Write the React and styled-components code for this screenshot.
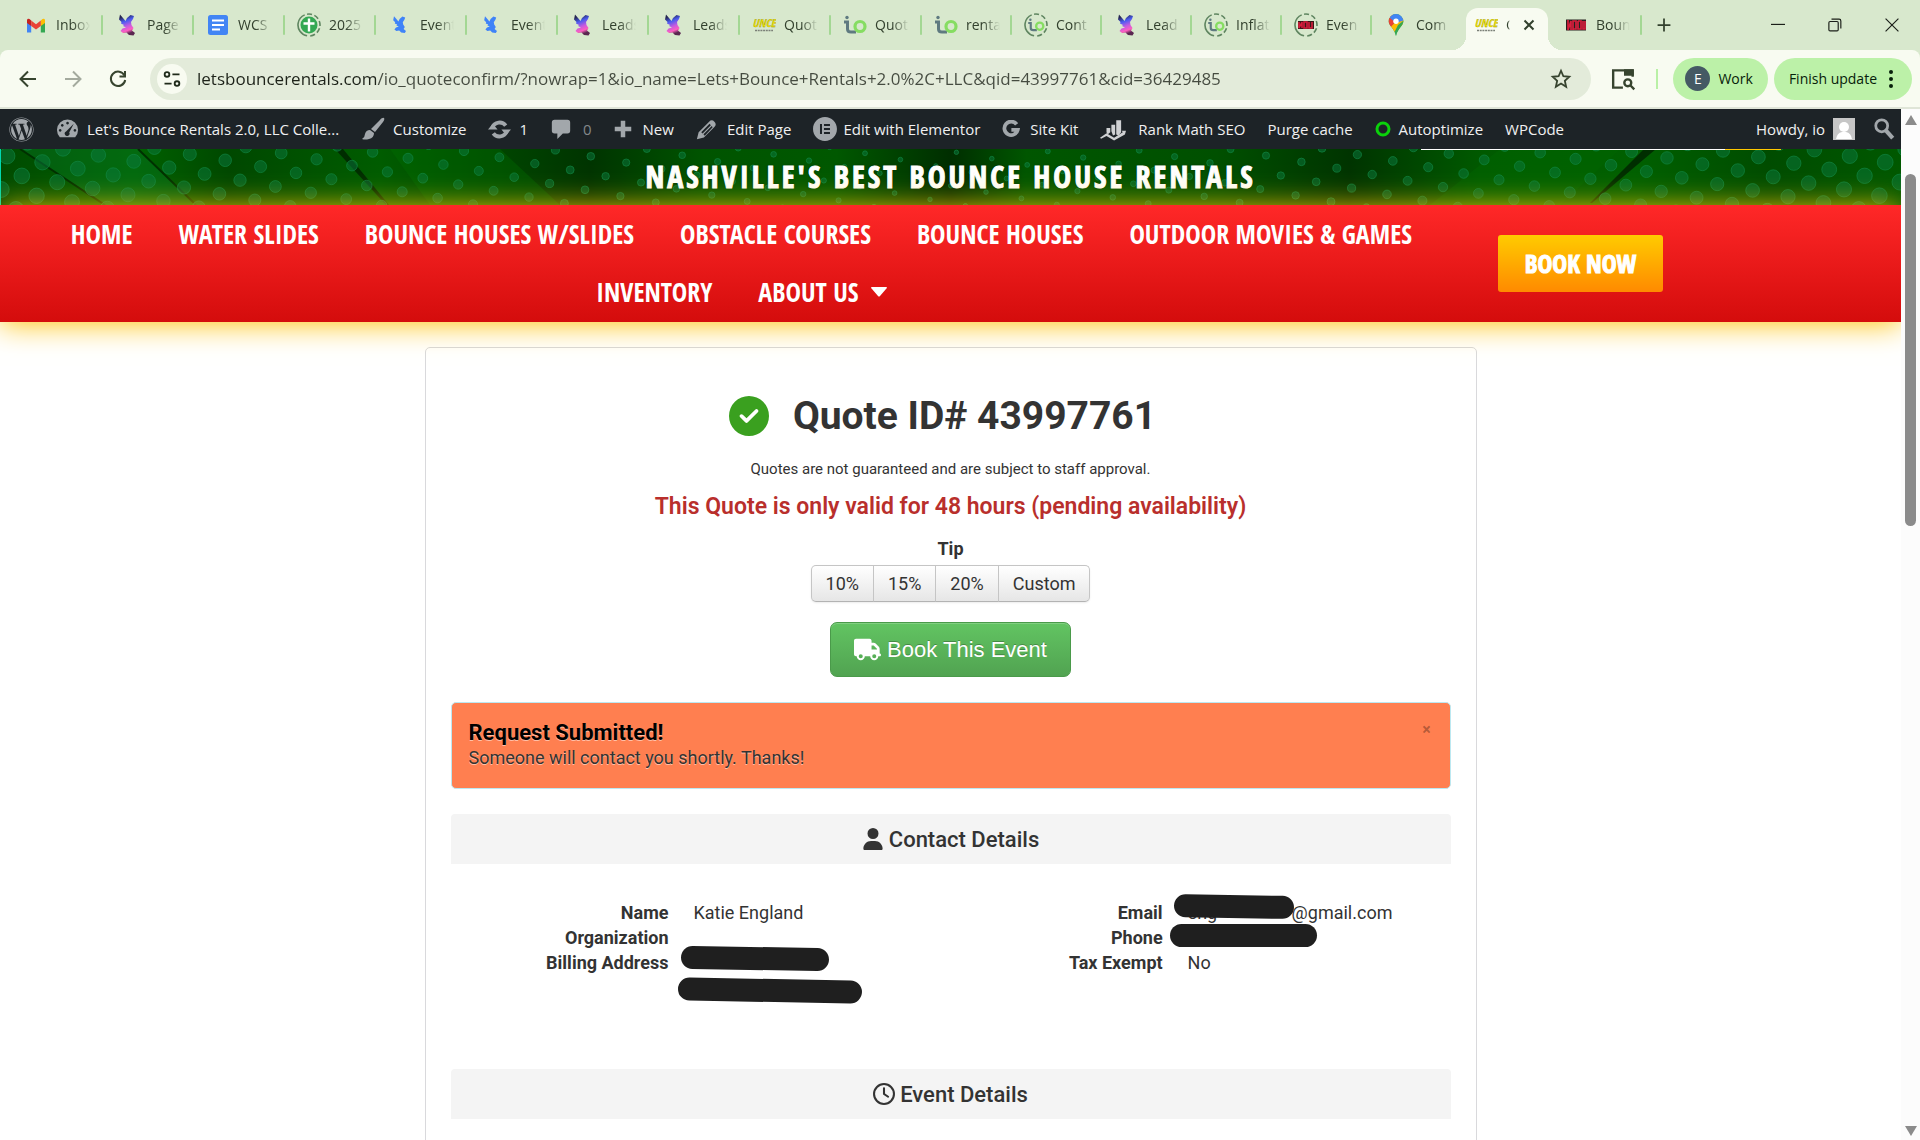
import React from "react";
import styled, { createGlobalStyle, css } from "styled-components";
import {
  FaCircleCheck,
  FaElementor,
  FaRegClock,
  FaTruck,
  FaUser,
  FaWordpress,
} from "react-icons/fa6";

const uiFont = `"Open Sans", "Noto Sans", sans-serif`;
const bodyFont = `Roboto, "Liberation Sans", sans-serif`;
const comicFont = `"Open Sans Condensed", "Roboto Condensed", sans-serif`;

const GlobalStyle = createGlobalStyle`
  * {
    box-sizing: border-box;
  }

  body {
    margin: 0;
    overflow: hidden;
    background: #fff;
    font-family: ${bodyFont};
  }

  button,
  input {
    margin: 0;
    padding: 0;
    border: 0;
    background: none;
    color: inherit;
    font: inherit;
  }
`;

/* ---------- browser window ---------- */

const Window = styled.div`
  display: flex;
  flex-direction: column;
  height: 100vh;
`;

const TabStrip = styled.header`
  display: flex;
  flex-shrink: 0;
  align-items: center;
  height: 50px;
  padding-left: 12px;
  background: #d8e8cd;
  color: #32402d;
  font-family: ${uiFont};
`;

const Tab = styled.div`
  display: flex;
  flex: 0 1 ${props => (props.$wide ? 91 : 90)}px;
  align-items: center;
  gap: 8px;
  min-width: 0;
  height: 40px;
  padding-left: 12px;

  &::after {
    content: "";
    width: 2px;
    height: 20px;
    margin-left: auto;
    border-radius: 1px;
    background: ${props => (props.$divider ? "#a3d793" : "transparent")};
  }
`;

const ActiveTab = styled.div`
  position: relative;
  display: flex;
  flex: 0 1 82px;
  align-self: flex-end;
  align-items: center;
  gap: 8px;
  height: 42px;
  margin: 0 4px;
  padding: 0 8px 8px;
  border-radius: 12px 12px 0 0;
  background: #f8fbf1;

  &::before,
  &::after {
    content: "";
    position: absolute;
    bottom: 0;
    width: 14px;
    height: 14px;
  }

  &::before {
    right: 100%;
    background: radial-gradient(circle at 0 0, transparent 14px, #f8fbf1 14px);
  }

  &::after {
    left: 100%;
    background: radial-gradient(circle at 100% 0, transparent 14px, #f8fbf1 14px);
  }
`;

const Favicon = styled.svg`
  flex-shrink: 0;
  width: 24px;
  height: 24px;
`;

const TabTitle = styled.span`
  width: ${props => (props.$short ? 4 : 34)}px;
  overflow: hidden;
  font-size: 14px;
  line-height: 20px;
  white-space: nowrap;
  mask-image: linear-gradient(90deg, #000 50%, transparent);
`;

const StripButton = styled.button`
  display: flex;
  align-items: center;
  justify-content: center;
  width: ${props => props.$width}px;
  height: 40px;
`;

const WindowButtons = styled.div`
  display: flex;
  margin-left: auto;
  color: #1b1f19;
`;

const Toolbar = styled.div`
  display: flex;
  flex-shrink: 0;
  align-items: center;
  height: 59px;
  padding: 0 8px 0 5px;
  border-bottom: 2px solid #dfe5d7;
  border-radius: 8px 8px 0 0;
  background: #f8fbf1;
  color: #37442f;
  font-family: ${uiFont};
`;

const ToolbarBack = styled.div`
  flex-shrink: 0;
  background: #d8e8cd;
`;

const NavButton = styled.button`
  display: flex;
  flex-shrink: 0;
  align-items: center;
  justify-content: center;
  width: 45px;
  height: 42px;
  color: ${props => (props.disabled ? "#a4aa9e" : "#37442f")};
`;

const Omnibox = styled.div`
  display: flex;
  flex: 1;
  align-items: center;
  gap: 10px;
  height: 42px;
  margin-left: 10px;
  padding: 0 19px 0 7px;
  border-radius: 21px;
  background: #e3ebda;
`;

const SiteInfo = styled.button`
  display: flex;
  align-items: center;
  justify-content: center;
  width: 30px;
  height: 30px;
  border-radius: 50%;
  background: #f8fbf1;
  color: #1f2a1a;
`;

/* the host is darker than the rest of the address */
const Address = styled.input`
  flex: 1;
  min-width: 0;
  height: 30px;
  background: linear-gradient(90deg, #1d2219 181px, #454b40 181px);
  background-clip: text;
  color: transparent;
  font-size: 17px;
  outline: none;
`;

const SidePanelButton = styled(NavButton)`
  width: 65px;
`;

const ToolbarDivider = styled.span`
  width: 2px;
  height: 20px;
  margin-right: 15px;
  background: #b9f0a6;
`;

const Pill = styled.button`
  display: flex;
  flex-shrink: 0;
  align-items: center;
  gap: 8px;
  height: 42px;
  margin-right: ${props => (props.$last ? 0 : 6)}px;
  padding: 0 15px 0 ${props => (props.$last ? 15 : 12)}px;
  border-radius: 21px;
  background: #bcf1a8;
  color: #07210a;
  font-size: 14px;
`;

const Initial = styled.span`
  display: flex;
  align-items: center;
  justify-content: center;
  width: 25px;
  height: 25px;
  border-radius: 50%;
  background: #455a64;
  color: #fff;
`;

const Viewport = styled.div`
  display: flex;
  flex: 1;
  min-height: 0;
`;

const Site = styled.div`
  flex: 1;
  min-width: 0;
  overflow: hidden;
`;

const Scrollbar = styled.div`
  display: flex;
  flex-direction: column;
  align-items: center;
  width: 19px;
  padding: 6px 0 4px;
  background: #fcfcfc;
`;

const ScrollTrack = styled.div`
  flex: 1;
  width: 11px;
  padding: 49px 0 0;
`;

const ScrollThumb = styled.div`
  height: 37%;
  border-radius: 6px;
  background: #8b8b8b;
`;

/* ---------- admin bar ---------- */

const AdminBar = styled.div`
  display: flex;
  align-items: center;
  gap: 22px;
  height: 40px;
  padding: 0 6px 0 9px;
  background: #1d2327;
  color: #f0f0f1;
  font-family: ${uiFont};
`;

const AdminItem = styled.a`
  display: flex;
  align-items: center;
  gap: ${props => (props.$gap ? props.$gap : 8)}px;
  color: ${props => (props.$muted ? "#83878a" : "#f0f0f1")};
  font-size: 15px;
  line-height: 42px;
  text-decoration: none;
  white-space: nowrap;

  svg {
    flex-shrink: 0;
    color: #a2a7ab;
  }
`;

const AdminRight = styled.div`
  display: flex;
  gap: 18px;
  margin-left: auto;
`;

/* ---------- site header ---------- */

const Banner = styled.div`
  display: grid;
  align-items: center;
  height: 56px;
  background: #005000;

  > * {
    grid-area: 1 / 1;
  }
`;

const BannerArt = styled.svg`
  width: 100%;
  height: 56px;
`;

const BannerTitle = styled.h2`
  position: relative;
  margin: 0;
  color: #fff;
  font-family: ${comicFont};
  font-size: 30px;
  font-weight: 700;
  letter-spacing: 3px;
  line-height: 56px;
  text-align: center;
  text-shadow: 0 0 3px rgba(0, 0, 0, 0.5);
  -webkit-text-stroke: 1px #fff;
`;

const NavBar = styled.nav`
  position: relative;
  display: flex;
  align-items: center;
  background: linear-gradient(#ff2828, #d40c0c);
  box-shadow: 0 2px 28px #ffc107;
  font-family: ${comicFont};
`;

const Menu = styled.ul`
  display: flex;
  flex: 0 0 78%;
  flex-wrap: wrap;
  justify-content: center;
  margin: 0;
  padding: 0 0 1px;
  list-style: none;
`;

const MenuLink = styled.a`
  display: flex;
  align-items: center;
  gap: 12px;
  padding: 0 23px;
  color: #fff;
  font-size: 26px;
  font-weight: 700;
  line-height: 58px;
  text-decoration: none;
`;

const BookNow = styled.a`
  margin-left: 15px;
  padding: 0 27px;
  border-radius: 3px;
  background: linear-gradient(#ffcb00, #ff8a00);
  color: #fff;
  font-size: 25px;
  font-weight: 700;
  line-height: 57px;
  text-decoration: none;
  -webkit-text-stroke: 1px #fff;
`;

/* ---------- quote ---------- */

const Card = styled.main`
  width: 1052px;
  max-width: 100%;
  margin: 25px auto 0;
  padding: 40px 25px 100px;
  border: 1px solid #d9d9dc;
  border-radius: 5px;
  background: #fff;
  color: #333;
  font-size: 18px;
  line-height: 25px;
`;

const Summary = styled.section`
  display: flex;
  flex-direction: column;
  align-items: center;
`;

const QuoteTitle = styled.h1`
  display: flex;
  align-items: center;
  gap: 24px;
  margin: 0;
  padding-right: 16px;
  font-size: 39px;
  font-weight: 700;
  line-height: 56px;

  svg {
    color: #3aa01f;
  }
`;

const Disclaimer = styled.p`
  margin: 13px 0 0;
  font-size: 15px;
`;

const Validity = styled.p`
  margin: 12px 0 0;
  color: #b92f2c;
  font-size: 23px;
  font-weight: 600;
`;

const TipLabel = styled.strong`
  margin-top: 17px;
`;

const TipGroup = styled.div`
  display: flex;
  margin-top: 4px;
  border-radius: 5px;
  box-shadow: 0 1px 2px rgba(0, 0, 0, 0.08);
`;

const TipButton = styled.button`
  height: 37px;
  padding: 0 14px;
  border: 1px solid #c5c5c5;
  border-bottom-color: #b3b3b3;
  background: linear-gradient(#fff, #e6e6e6);

  & + & {
    margin-left: -1px;
  }

  &:first-child {
    border-radius: 5px 0 0 5px;
  }

  &:last-child {
    border-radius: 0 5px 5px 0;
  }
`;

const BookButton = styled.button`
  display: flex;
  align-items: center;
  gap: 6px;
  height: 55px;
  margin-top: 20px;
  padding: 0 23px;
  border: 1px solid #4a9a4a;
  border-radius: 7px;
  background: linear-gradient(#62c462, #51a351);
  box-shadow: inset 0 1px 0 rgba(255, 255, 255, 0.2);
  color: #fff;
  font-family: "Liberation Sans", sans-serif;
  font-size: 22px;
  text-shadow: 0 -1px 0 rgba(0, 0, 0, 0.25);
`;

const Alert = styled.div`
  display: flex;
  align-items: flex-start;
  justify-content: space-between;
  margin-top: 25px;
  padding: 17px 17px 18px;
  border: 1px solid #bce8f1;
  border-radius: 5px;
  background: #ff7f50;
  text-shadow: 0 1px 0 rgba(255, 255, 255, 0.5);

  h4 {
    margin: 0;
    color: #000;
    font-size: 22px;
    line-height: 25px;
  }

  p {
    margin: 0;
  }
`;

const CloseButton = styled.button`
  width: 12px;
  margin-top: -3px;
  color: rgba(0, 0, 0, 0.3);
  font-size: 16px;
  font-weight: 700;
  line-height: 25px;
`;

const SectionTitle = styled.h3`
  display: flex;
  align-items: center;
  justify-content: center;
  gap: 5px;
  height: 50px;
  margin: 25px 0 0;
  border-radius: 4px 4px 0 0;
  background: #f4f4f4;
  font-size: 22px;
  font-weight: 500;
`;

const Details = styled.div`
  display: grid;
  grid-template-columns: 42fr 43fr;
  margin: 36px 0 69px;

  & + ${SectionTitle} {
    margin-top: 0;
  }
`;

const DetailList = styled.dl`
  display: grid;
  grid-template-columns: 218px 1fr;
  column-gap: 25px;
  align-content: start;
  margin: 0;

  dt {
    font-weight: 700;
    text-align: right;
  }

  dd {
    position: relative;
    min-height: 25px;
    margin: 0;
  }
`;

const AddressValue = styled.dd`
  && {
    min-height: 50px;
  }
`;

const MailName = styled.span`
  display: inline-block;
  width: 104px;
`;

const Redaction = styled.span`
  ${({ $left, $top, $width, $tilt }) => css`
    position: absolute;
    left: ${$left}px;
    top: ${$top}px;
    width: ${$width}px;
    transform: rotate(${$tilt}deg);
  `}
  height: 23px;
  border-radius: 12px;
  background: #1f1f1f;
`;

/* ---------- favicons ---------- */

const birdPath =
  "M5 1.500 L8 5 L10.500 8 L12 5 L15.500 2 L19 3 L18 6 L16 9 L16.500 12 L18.500 15 L17 17.500 L20 20 L18.500 22.500 L14 22 L11.500 19.500 L8 20 L5.500 18 L7.500 15.500 L11 14.500 L8 13 L9 12 L6 10.500 L6.500 9 L4 6.500 Z";

const Ring = () => (
  <circle
    cx="12"
    cy="12"
    r="11"
    fill="none"
    stroke="#5f8560"
    strokeWidth="1.6"
    strokeDasharray="28 2.5 5 2.5 5 2.5 5 2.5 5 2.5 5 4"
    transform="rotate(100 12 12)"
  />
);

const IoMark = () => (
  <g fill="none">
    <circle cx="4" cy="4.500" r="1.700" fill="#5f7a80" />
    <path d="M1 9 H4.500 V16 Q4.500 19 8 19 H13" stroke="#5f7a80" strokeWidth="3" />
    <circle cx="17" cy="13.500" r="5" stroke="#86dd62" strokeWidth="3.200" />
  </g>
);

const favicons = {
  gmail: (
    <g>
      <path d="M3 19.500 V7 L7.200 10 V19.500 Z" fill="#4285f4" />
      <path d="M16.800 19.500 V10 L21 7 V19.500 Z" fill="#34a853" />
      <path d="M3 7 V10 L7.200 13 V7.500 L5.500 6 Q3.500 5 3 7 Z" fill="#c5221f" />
      <path d="M21 7 V10 L16.800 13 V7.500 L18.500 6 Q20.500 5 21 7 Z" fill="#fbbc04" />
      <path d="M7.200 7.500 L12 11.200 L16.800 7.500 V13 L12 16.600 L7.200 13 Z" fill="#ea4335" />
    </g>
  ),
  bird: (
    <g>
      <defs>
        <linearGradient id="bird" x1="0" y1="0" x2="0.300" y2="1">
          <stop offset="0.150" stopColor="#26264f" />
          <stop offset="0.400" stopColor="#4a5cf0" />
          <stop offset="0.650" stopColor="#c65be0" />
          <stop offset="0.850" stopColor="#ff5fc0" />
          <stop offset="1" stopColor="#5a2850" />
        </linearGradient>
      </defs>
      <path d={birdPath} fill="url(#bird)" />
    </g>
  ),
  blueBird: <path d={birdPath} fill="#3f83f8" transform="translate(2 2) scale(0.800)" />,
  docs: (
    <g>
      <rect x="2" y="2" width="20" height="20" rx="2.500" fill="#4285f4" />
      <path d="M6 7.500 H18 M6 12 H18 M6 16.500 H14" stroke="#fff" strokeWidth="2" />
    </g>
  ),
  plus: (
    <g>
      <Ring />
      <circle cx="12" cy="12" r="8.500" fill="#34a853" />
      <path d="M12 5.500 V18.500 M6.500 10.500 H17.500" stroke="#fff" strokeWidth="2.400" />
    </g>
  ),
  bounce: (
    <g>
      <text
        x="12"
        y="14"
        textAnchor="middle"
        fill="#f2e400"
        stroke="#8c8a10"
        strokeWidth="0.300"
        fontFamily="Open Sans Condensed"
        fontSize="11"
        fontStyle="italic"
        fontWeight="700"
      >
        UNCE
      </text>
      <path d="M3 17.500 H21" stroke="#7b8078" strokeWidth="1.500" strokeDasharray="2 0.700" />
    </g>
  ),
  io: <IoMark />,
  ioRing: (
    <g>
      <Ring />
      <g transform="translate(3.500 3.500) scale(0.720)">
        <IoMark />
      </g>
    </g>
  ),
  red: (
    <g>
      <rect x="2" y="6.500" width="20" height="11" fill="#26201f" />
      <path
        d="M4 7 V17 L7 8 V17 M9 17 V8 H12 V16 H9 M14 8 V16 H17 V8 H14 M19 8 V16 H21 V8"
        stroke="#d81e3d"
        strokeWidth="1.700"
        fill="none"
      />
    </g>
  ),
  redRing: (
    <g>
      <Ring />
      <path d="M4 8 H20 V16 H4 Z" fill="#3a1717" />
      <path d="M5 9 V15 L8 9 V15 M10 9 V15 H13 V9 Z M15 9 V15 H18 V9" stroke="#d81e3d" strokeWidth="1.600" fill="none" />
    </g>
  ),
  maps: (
    <g>
      <clipPath id="pin">
        <path d="M12 1 A7.300 7.300 0 0 1 19.300 8.300 C19.300 13 13.500 15.500 12 23 C10.500 15.500 4.700 13 4.700 8.300 A7.300 7.300 0 0 1 12 1 Z" />
      </clipPath>
      <g clipPath="url(#pin)">
        <path d="M0 0 H24 V24 H0 Z" fill="#34a853" />
        <path d="M0 17 L20 4 L24 8 L9 20 Z" fill="#fbbc04" />
        <path d="M14 12 L24 4 V24 H8 Z" fill="#34a853" />
        <path d="M0 0 H8 L12 8 L6 15 H0 Z" fill="#ea4335" />
        <path d="M6 0 H24 V6 L12 10 L6 5 Z" fill="#4285f4" />
      </g>
      <circle cx="12" cy="8.300" r="2.700" fill="#fff" />
    </g>
  ),
};

const tabs = [
  ["gmail", "Inbox"],
  ["bird", "Page"],
  ["docs", "WCS"],
  ["plus", "2025"],
  ["blueBird", "Event"],
  ["blueBird", "Event"],
  ["bird", "Leads"],
  ["bird", "Leads"],
  ["bounce", "Quot"],
  ["io", "Quot"],
  ["io", "renta"],
  ["ioRing", "Cont"],
  ["bird", "Lead"],
  ["ioRing", "Inflat"],
  ["redRing", "Even"],
  ["maps", "Com"],
];

const Icon = ({ size = 24, children, ...rest }) => (
  <svg width={size} height={size} viewBox="0 0 24 24" fill="none" stroke="currentColor" {...rest}>
    {children}
  </svg>
);

const BrowserTabs = () => (
  <TabStrip>
    {tabs.map(([icon, title], i) => (
      <Tab key={i} $wide={i < 10} $divider={i < 15}>
        <Favicon viewBox="0 0 24 24">{favicons[icon]}</Favicon>
        <TabTitle>{title}</TabTitle>
      </Tab>
    ))}
    <ActiveTab>
      <Favicon viewBox="0 0 24 24">{favicons.bounce}</Favicon>
      <TabTitle $short>Q</TabTitle>
      <StripButton $width={22} aria-label="Close tab">
        <Icon size={12} strokeWidth="4">
          <path d="M3 3 L21 21 M21 3 L3 21" />
        </Icon>
      </StripButton>
    </ActiveTab>
    <Tab $divider>
      <Favicon viewBox="0 0 24 24">{favicons.red}</Favicon>
      <TabTitle>Boun</TabTitle>
    </Tab>
    <StripButton $width={44} aria-label="New tab">
      <Icon size={14} strokeWidth="3">
        <path d="M12 1 V23 M1 12 H23" />
      </Icon>
    </StripButton>
    <WindowButtons>
      <StripButton $width={57} aria-label="Minimize">
        <Icon size={14} strokeWidth="2">
          <path d="M0 11 H24" />
        </Icon>
      </StripButton>
      <StripButton $width={57} aria-label="Restore">
        <Icon size={14} strokeWidth="2">
          <path d="M6 2 H19 Q22 2 22 5 V18" />
          <rect x="1.500" y="6" width="16" height="16" rx="2" />
        </Icon>
      </StripButton>
      <StripButton $width={57} aria-label="Close">
        <Icon size={14} strokeWidth="2">
          <path d="M1 1 L23 23 M23 1 L1 23" />
        </Icon>
      </StripButton>
    </WindowButtons>
  </TabStrip>
);

const BrowserToolbar = () => (
  <ToolbarBack>
    <Toolbar>
      <NavButton aria-label="Back">
        <Icon size={24} strokeWidth="2">
          <path d="M20 12 H5 M12 4.500 L4.500 12 L12 19.500" />
        </Icon>
      </NavButton>
      <NavButton aria-label="Forward" disabled>
        <Icon size={24} strokeWidth="2">
          <path d="M4 12 H19 M12 4.500 L19.500 12 L12 19.500" />
        </Icon>
      </NavButton>
      <NavButton aria-label="Reload">
        <Icon size={24} strokeWidth="2">
          <path d="M18.500 8.500 A7.200 7.200 0 1 0 19.200 13" />
          <path d="M19 4 V9.500 H13.500" />
        </Icon>
      </NavButton>
      <Omnibox>
        <SiteInfo aria-label="Site information">
          <Icon size={20} strokeWidth="2.200">
            <circle cx="6" cy="6.500" r="2.800" />
            <path d="M12.500 6.500 H21 M3 17.500 H11.500" />
            <circle cx="18" cy="17.500" r="2.800" />
          </Icon>
        </SiteInfo>
        <Address
          aria-label="Address"
          defaultValue="letsbouncerentals.com/io_quoteconfirm/?nowrap=1&io_name=Lets+Bounce+Rentals+2.0%2C+LLC&qid=43997761&cid=36429485"
        />
        <Icon size={22} strokeWidth="2">
          <path d="M12 3 L14.600 9 L21 9.600 L16.200 14 L17.600 20.500 L12 17 L6.400 20.500 L7.800 14 L3 9.600 L9.400 9 Z" />
        </Icon>
      </Omnibox>
      <SidePanelButton aria-label="Side panel search">
        <Icon size={26} strokeWidth="2.200">
          <path d="M11 20 H2 V4 H20 V10" />
          <path d="M12 3 H21 V9 H12 Z" fill="currentColor" stroke="none" />
          <circle cx="15.500" cy="15.500" r="3.200" />
          <path d="M18 18 L21.500 21.500" />
        </Icon>
      </SidePanelButton>
      <ToolbarDivider />
      <Pill>
        <Initial>E</Initial>
        Work
      </Pill>
      <Pill $last>
        Finish update
        <svg width="12" height="20" viewBox="0 0 12 20" fill="currentColor">
          <circle cx="6" cy="3" r="2" />
          <circle cx="6" cy="10" r="2" />
          <circle cx="6" cy="17" r="2" />
        </svg>
      </Pill>
    </Toolbar>
  </ToolbarBack>
);

const WordPressBar = () => (
  <AdminBar>
    <AdminItem href="#wp" aria-label="WordPress">
      <FaWordpress size={25} />
    </AdminItem>
    <AdminItem href="#site">
      <Icon size={23} stroke="none">
        <path
          fill="currentColor"
          fillRule="evenodd"
          d="M4 20 A11 11 0 1 1 20 20 Z M12 4 a1.400 1.400 0 1 0 .1 0 Z M6.500 6.300 a1.400 1.400 0 1 0 .1 0 Z M4.300 11.500 a1.400 1.400 0 1 0 .1 0 Z M19.700 11.500 a1.400 1.400 0 1 0 .1 0 Z M18.500 6 L13.800 15 A2.500 2.500 0 1 1 10.500 14 Z"
        />
      </Icon>
      Let's Bounce Rentals 2.0, LLC Colle...
    </AdminItem>
    <AdminItem href="#customize">
      <Icon size={24} stroke="none">
        <path fill="currentColor" d="M23 1 Q24 2 22 5 L14 15 L10 12 L18 4 Q21 0 23 1 Z M9 13 L13 16 Q13 21 8 22 Q4 23 1 22 Q4 20 4 17 Q5 13 9 13 Z" />
      </Icon>
      Customize
    </AdminItem>
    <AdminItem href="#updates">
      <Icon size={23} strokeWidth="4">
        <path d="M4.500 10 A8 8 0 0 1 18.500 8" />
        <path d="M19.500 14 A8 8 0 0 1 5.500 16" />
        <path d="M14 12 H24 L19 18 Z M0 12 H10 L5 6 Z" fill="currentColor" stroke="none" />
      </Icon>
      1
    </AdminItem>
    <AdminItem href="#comments" $muted $gap={11}>
      <Icon size={22} stroke="none">
        <path fill="currentColor" d="M5 2 H19 Q22 2 22 5 V14 Q22 17 19 17 H14 L8 23 V17 H5 Q2 17 2 14 V5 Q2 2 5 2 Z" />
      </Icon>
      0
    </AdminItem>
    <AdminItem href="#new" $gap={11}>
      <Icon size={18} strokeWidth="6">
        <path d="M12 1 V23 M1 12 H23" />
      </Icon>
      New
    </AdminItem>
    <AdminItem href="#edit" $gap={10}>
      <Icon size={21} stroke="none">
        <path
          fill="currentColor"
          fillRule="evenodd"
          d="M15 3 Q18 0 21 3 Q24 6 21 9 L9 21 L1 23 L3 15 Z M6 15 L7.500 16.500 L17 7 L15.500 5.500 Z M8.500 17.500 L10 19 L19 9.500 L18 8 Z"
        />
      </Icon>
      Edit Page
    </AdminItem>
    <AdminItem href="#elementor" $gap={6}>
      <FaElementor size={24} />
      Edit with Elementor
    </AdminItem>
    <AdminItem href="#sitekit" $gap={10}>
      <Icon size={18} strokeWidth="5">
        <path d="M19.500 5.800 A9 9 0 1 0 21 13 H12.500" />
      </Icon>
      Site Kit
    </AdminItem>
    <AdminItem href="#rankmath" $gap={12}>
      <Icon size={26} stroke="none">
        <path fill="#cfd1d3" d="M6 15 V11 H9.500 V15 L7 17 Z M10.500 14 V8 H14 V17 L12 18 Z M15 17 V4 H19.500 V15 L17 18 Z" />
        <path d="M0 20 L6 16 L13 20 L21 15 L20 13.500 L24 13.500 L23 17 L13 22.500 L6 18.500 L1 21 Z" fill="#cfd1d3" />
      </Icon>
      Rank Math SEO
    </AdminItem>
    <AdminItem href="#purge">Purge cache</AdminItem>
    <AdminItem href="#autoptimize">
      <svg width="16" height="16" viewBox="0 0 16 16">
        <circle cx="8" cy="8" r="6" fill="none" stroke="#0bd10b" strokeWidth="3" />
      </svg>
      Autoptimize
    </AdminItem>
    <AdminItem href="#wpcode">WPCode</AdminItem>
    <AdminRight>
      <AdminItem href="#account">
        Howdy, io
        <svg width="22" height="22" viewBox="0 0 22 22">
          <path d="M0 0 H22 V22 H0 Z" fill="#c6c6c6" />
          <circle cx="11" cy="9" r="5" fill="#fff" />
          <path d="M3 21 Q4 15 9 14 H13 Q18 15 19 21 Z" fill="#fff" />
        </svg>
      </AdminItem>
      <AdminItem href="#search" aria-label="Search">
        <Icon size={22} strokeWidth="3">
          <circle cx="9.500" cy="8.500" r="6.500" />
          <path d="M14 13.500 L21.500 22" strokeWidth="4.500" />
        </Icon>
      </AdminItem>
    </AdminRight>
  </AdminBar>
);

/* halftone dots: a slanted lattice, big at both ends and small in the middle */
const dots = [];
for (let i = -20; i < 70; i++) {
  for (let j = -40; j < 20; j++) {
    const x = 189.8 + 35.4 * i - 20.6 * j;
    const y = 5 + 6.3 * i + 13.6 * j;
    if (x > -10 && x < 1911 && y > -8 && y < 64) {
      dots.push({ x, y, r: 2.2 + 5.8 * Math.pow(Math.abs(x - 950) / 950, 1.3) });
    }
  }
}

const BannerBackground = () => (
  <BannerArt viewBox="0 0 1901 56" preserveAspectRatio="none" aria-hidden="true">
    <defs>
      <linearGradient id="leaf">
        <stop offset="0" stopColor="#004a00" />
        <stop offset="0.070" stopColor="#006200" />
        <stop offset="0.120" stopColor="#004800" />
        <stop offset="0.200" stopColor="#005c00" />
        <stop offset="0.310" stopColor="#003400" />
        <stop offset="0.370" stopColor="#005400" />
        <stop offset="0.440" stopColor="#005800" />
        <stop offset="0.500" stopColor="#002e00" />
        <stop offset="0.540" stopColor="#005600" />
        <stop offset="0.640" stopColor="#005000" />
        <stop offset="0.710" stopColor="#003400" />
        <stop offset="0.780" stopColor="#005a00" />
        <stop offset="0.860" stopColor="#006000" />
        <stop offset="0.930" stopColor="#004c00" />
        <stop offset="1" stopColor="#005800" />
      </linearGradient>
    </defs>
    <path d="M0 0 H1901 V56 H0 Z" fill="url(#leaf)" />
    <path d="M20 0 H138 L196 56 H105 Z" fill="#0a7a2a" opacity="0.350" />
    <path d="M390 0 H500 L560 56 H430 Z" fill="#007000" opacity="0.350" />
    <path d="M1500 0 H1620 L1560 56 H1430 Z" fill="#006a00" opacity="0.350" />
    <path d="M138 0 L196 56 M20 0 L105 56" stroke="#003000" strokeWidth="2" />
    <path d="M335 0 H343 L389 56 H386 Z M1644 0 H1656 L1592 54 H1590 Z" fill="#002200" opacity="0.800" />
    {dots.map((dot, i) => (
      <circle key={i} cx={dot.x} cy={dot.y} r={dot.r} fill="#0a7a40" fillOpacity="0.500" stroke="#128a48" strokeOpacity="0.600" />
    ))}
    <path d="M0 0 H1 V56 H0 Z" fill="#00d8b0" />
    <path d="M1421 0 H1725 V1 H1421 Z" fill="#fff" />
    <path d="M1725 0 H1781 V1 H1725 Z" fill="#ffc800" />
  </BannerArt>
);

const menu = [
  "HOME",
  "WATER SLIDES",
  "BOUNCE HOUSES W/SLIDES",
  "OBSTACLE COURSES",
  "BOUNCE HOUSES",
  "OUTDOOR MOVIES & GAMES",
  "INVENTORY",
  "ABOUT US",
];

const SiteHeader = () => (
  <>
    <Banner>
      <BannerBackground />
      <BannerTitle>NASHVILLE'S BEST BOUNCE HOUSE RENTALS</BannerTitle>
    </Banner>
    <NavBar>
      <Menu>
        {menu.map(label => (
          <li key={label}>
            <MenuLink href="#menu">
              {label}
              {label === "ABOUT US" && (
                <svg width="16" height="10" viewBox="0 0 16 10">
                  <path d="M1 0 H15 Q17 0 15 2 L9 9 Q8 10 7 9 L1 2 Q-1 0 1 0 Z" fill="#fff" />
                </svg>
              )}
            </MenuLink>
          </li>
        ))}
      </Menu>
      <BookNow href="#book">BOOK NOW</BookNow>
    </NavBar>
  </>
);

const Quote = () => (
  <Card>
    <Summary>
      <QuoteTitle>
        <FaCircleCheck size={40} />
        Quote ID# 43997761
      </QuoteTitle>
      <Disclaimer>Quotes are not guaranteed and are subject to staff approval.</Disclaimer>
      <Validity>This Quote is only valid for 48 hours (pending availability)</Validity>
      <TipLabel>Tip</TipLabel>
      <TipGroup>
        {["10%", "15%", "20%", "Custom"].map(tip => (
          <TipButton key={tip}>{tip}</TipButton>
        ))}
      </TipGroup>
      <BookButton>
        <FaTruck size={27} />
        Book This Event
      </BookButton>
    </Summary>
    <Alert role="alert">
      <div>
        <h4>Request Submitted!</h4>
        <p>Someone will contact you shortly. Thanks!</p>
      </div>
      <CloseButton aria-label="Dismiss">×</CloseButton>
    </Alert>
    <SectionTitle>
      <FaUser size={22} />
      Contact Details
    </SectionTitle>
    <Details>
      <DetailList>
        <dt>Name</dt>
        <dd>Katie England</dd>
        <dt>Organization</dt>
        <dd />
        <dt>Billing Address</dt>
        <AddressValue>
          <Redaction $left={-13} $top={-3} $width={148} $tilt={1} />
          <Redaction $left={-16} $top={29} $width={184} $tilt={1} />
        </AddressValue>
      </DetailList>
      <DetailList>
        <dt>Email</dt>
        <dd>
          <MailName>eng</MailName>@gmail.com
          <Redaction $left={-14} $top={-5} $width={120} $tilt={1} />
        </dd>
        <dt>Phone</dt>
        <dd>
          <Redaction $left={-18} $top={-1} $width={147} $tilt={0} />
        </dd>
        <dt>Tax Exempt</dt>
        <dd>No</dd>
      </DetailList>
    </Details>
    <SectionTitle>
      <FaRegClock size={22} />
      Event Details
    </SectionTitle>
  </Card>
);

const App = () => (
  <Window>
    <GlobalStyle />
    <BrowserTabs />
    <BrowserToolbar />
    <Viewport>
      <Site>
        <WordPressBar />
        <SiteHeader />
        <Quote />
      </Site>
      <Scrollbar>
        <svg width="12" height="10" viewBox="0 0 12 10">
          <path d="M6 0 L12 10 H0 Z" fill="#8b8b8b" />
        </svg>
        <ScrollTrack>
          <ScrollThumb />
        </ScrollTrack>
        <svg width="12" height="10" viewBox="0 0 12 10">
          <path d="M0 0 H12 L6 10 Z" fill="#8b8b8b" />
        </svg>
      </Scrollbar>
    </Viewport>
  </Window>
);

export default App;
